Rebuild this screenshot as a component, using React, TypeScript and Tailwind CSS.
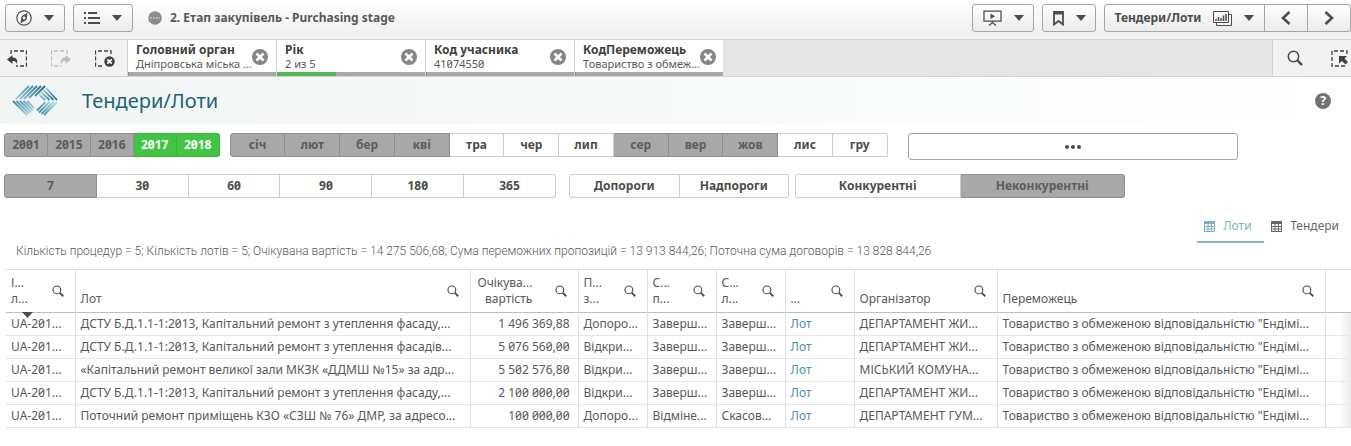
import React from 'react';

interface Option {
  label: string;
  state?: 'selected' | 'excluded';
}

const years: Option[] = [
  { label: '2001', state: 'excluded' },
  { label: '2015', state: 'excluded' },
  { label: '2016', state: 'excluded' },
  { label: '2017', state: 'selected' },
  { label: '2018', state: 'selected' },
];

const months: Option[] = [
  { label: 'січ', state: 'excluded' },
  { label: 'лют', state: 'excluded' },
  { label: 'бер', state: 'excluded' },
  { label: 'кві', state: 'excluded' },
  { label: 'тра' },
  { label: 'чер' },
  { label: 'лип' },
  { label: 'сер', state: 'excluded' },
  { label: 'вер', state: 'excluded' },
  { label: 'жов', state: 'excluded' },
  { label: 'лис' },
  { label: 'гру' },
];

const days: Option[] = [
  { label: '7', state: 'excluded' },
  { label: '30' },
  { label: '60' },
  { label: '90' },
  { label: '180' },
  { label: '365' },
];

const thresholds: Option[] = [{ label: 'Допороги' }, { label: 'Надпороги' }];

const competition: Option[] = [
  { label: 'Конкурентні' },
  { label: 'Неконкурентні', state: 'excluded' },
];

const selections = [
  { title: 'Головний орган', value: 'Дніпровська міська ...', share: 1 },
  { title: 'Рік', value: '2 из 5', share: 40 },
  { title: 'Код учасника', value: '41074550', share: 1 },
  { title: 'КодПереможець', value: 'Товариство з обмеж...', share: 1 },
];

const columns = [
  { lines: ['І...', 'л...'], width: 'w-[69px]', sorted: true },
  { lines: ['Лот'], width: '' },
  { lines: ['Очікува...', 'вартість'], width: 'w-[108px]', right: true },
  { lines: ['П...', 'з...'], width: 'w-[69px]' },
  { lines: ['С...', 'п...'], width: 'w-[69px]' },
  { lines: ['С...', 'л...'], width: 'w-[69px]' },
  { lines: ['...'], width: 'w-[69px]' },
  { lines: ['Організатор'], width: 'w-[143px]' },
  { lines: ['Переможець'], width: 'w-[328px]' },
];

const winner = 'Товариство з обмеженою відповідальністю "Ендімі...';

const rows = [
  ['UA-201...', 'ДСТУ Б.Д.1.1-1:2013, Капітальний ремонт з утеплення фасаду,...', '1 496 369,88', 'Допоро...', 'Заверш...', 'Заверш...', 'Лот', 'ДЕПАРТАМЕНТ ЖИ...', winner],
  ['UA-201...', 'ДСТУ Б.Д.1.1-1:2013, Капітальний ремонт з утеплення фасадів...', '5 076 560,00', 'Відкри...', 'Заверш...', 'Заверш...', 'Лот', 'ДЕПАРТАМЕНТ ЖИ...', winner],
  ['UA-201...', '«Капітальний ремонт великої зали МКЗК «ДДМШ №15» за адр...', '5 502 576,80', 'Відкри...', 'Заверш...', 'Заверш...', 'Лот', 'МІСЬКИЙ КОМУНА...', winner],
  ['UA-201...', 'ДСТУ Б.Д.1.1-1:2013, Капітальний ремонт з утеплення фасаду,...', '2 100 000,00', 'Відкри...', 'Заверш...', 'Заверш...', 'Лот', 'ДЕПАРТАМЕНТ ЖИ...', winner],
  ['UA-201...', 'Поточний ремонт приміщень КЗО «СЗШ № 76» ДМР, за адресо...', '100 000,00', 'Допоро...', 'Відміне...', 'Скасов...', 'Лот', 'ДЕПАРТАМЕНТ ГУМ...', winner],
];

const Caret: React.FC = () => (
  <svg width="10" height="6" viewBox="0 0 10 6" fill="#4d4d4d"><path d="M0 0h10L5 6z" /></svg>
);

const SearchIcon: React.FC<{ size: number }> = ({ size }) => (
  <svg width={size} height={size} viewBox="0 0 16 16" fill="none" stroke="#4a4a4a">
    <circle cx="6.5" cy="6.5" r="5.2" strokeWidth="1.5" />
    <path d="M10.4 10.4l4.6 4.6" strokeWidth="2.4" />
  </svg>
);

const ClearIcon: React.FC = () => (
  <svg width="16" height="16" viewBox="0 0 16 16">
    <circle cx="8" cy="8" r="8" fill="#858585" />
    <path d="M4.500 4.500l7 7M11.500 4.500l-7 7" stroke="#fff" strokeWidth="2.600" />
  </svg>
);

const TableIcon: React.FC = () => (
  <svg width="11" height="11" viewBox="0 0 11 11" fill="none" stroke="currentColor">
    <path d="M0 1.500h11" strokeWidth="3" />
    <path d="M.5 1v9.500h10V1M0 5.500h11M0 8h11M4 2v9M7.500 2v9" />
  </svg>
);

const Logo: React.FC = () => (
  <svg width="46" height="32" viewBox="0 0 46 32" fill="none" strokeWidth="1.8">
    <defs>
      <linearGradient id="up" gradientUnits="userSpaceOnUse" x1="6" y1="16" x2="30" y2="1">
        <stop offset="0" stopColor="#9fd0e0" />
        <stop offset="1" stopColor="#256f87" />
      </linearGradient>
      <linearGradient id="left" gradientUnits="userSpaceOnUse" x1="2" y1="16" x2="18" y2="30">
        <stop offset="0" stopColor="#3f8ba3" />
        <stop offset="1" stopColor="#a9d6e4" />
      </linearGradient>
      <linearGradient id="right" gradientUnits="userSpaceOnUse" x1="28" y1="5" x2="42" y2="16">
        <stop offset="0" stopColor="#b3dbe7" />
        <stop offset="1" stopColor="#256f87" />
      </linearGradient>
      <linearGradient id="down" gradientUnits="userSpaceOnUse" x1="42" y1="17" x2="29" y2="29">
        <stop offset="0" stopColor="#b3dbe7" />
        <stop offset="1" stopColor="#3f8ba3" />
      </linearGradient>
    </defs>
    <path stroke="url(#up)" d="M17 1L4 14M21 1L8 14M25 1L12 14M29 1L17 13M33 1L23 11" />
    <path stroke="url(#left)" d="M1 16L15 30M4.500 16L17 28.500M8 16L19 27M11.500 16L20.500 25M15 16L22 23" />
    <path stroke="url(#right)" d="M34 3L45 15M31 4.500L41.500 15M29 7L37.500 15M27 9.500L33 15" />
    <path stroke="url(#down)" d="M45 17L32 30M41.500 17L29.500 29M37.500 17L27 27.500M33.500 17L25 25.500" />
  </svg>
);

const buttonStyle =
  'h-7 flex items-center justify-center border border-[#a6a6a6] rounded-[3px] bg-linear-to-b from-white to-[#ebebeb]';

const ButtonGroup: React.FC<{ options: Option[]; label: string; className: string }> = ({ options, label, className }) => (
  <div role="group" aria-label={label} className={`flex h-6 ${className}`}>
    {options.map((o) => {
      const color =
        o.state === 'selected'
          ? 'bg-[#42c545] text-white border-[#3bb23e]'
          : o.state === 'excluded'
            ? 'bg-[#a8a8a8] text-[#5c5c5c] border-[#8f8f8f]'
            : 'bg-white text-[#4d4d4d] border-[#cccccc]';
      return (
        <button
          key={o.label}
          type="button"
          className={`flex-1 min-w-0 border border-l-0 first:border-l first:rounded-l-[3px] last:rounded-r-[3px] text-xs font-bold ${color}`}
        >
          {o.label}
        </button>
      );
    })}
  </div>
);

const TopBar: React.FC = () => (
  <header className="h-[39px] pl-[5px] pt-1 flex items-start justify-between bg-linear-to-b from-white to-[#efefef]">
    <div className="flex items-center gap-2">
      <button type="button" aria-label="Навігація" className={`${buttonStyle} w-15 gap-3`}>
        <svg width="16" height="16" viewBox="0 0 16 16" fill="none" stroke="#4d4d4d">
          <circle cx="8" cy="8" r="7.2" strokeWidth="1.2" />
          <path d="M11 3.500L10 9.600 5 12.500 6 6.400z" fill="#4d4d4d" />
          <circle cx="8" cy="8" r="1.400" fill="#fff" stroke="none" />
        </svg>
        <Caret />
      </button>
      <button type="button" aria-label="Меню" className={`${buttonStyle} w-15 gap-3`}>
        <svg width="16" height="12" viewBox="0 0 16 12" stroke="#4d4d4d" strokeWidth="2">
          <path d="M0 1h2M0 6h2M0 11h2M4 1h9M4 6h12M4 11h12" />
        </svg>
        <Caret />
      </button>
      <div className="flex items-center gap-2 pl-[7px] text-xs font-bold text-[#595959]">
        <svg width="14" height="14" viewBox="0 0 14 14">
          <circle cx="7" cy="7" r="6.800" fill="#8c8c8c" />
          <path d="M2 7h10" stroke="#c9c9c9" strokeWidth="1.500" strokeDasharray="2 1" />
        </svg>
        <h1>2. Етап закупівель - Purchasing stage</h1>
      </div>
    </div>
    <div className="flex items-center gap-2">
      <button type="button" aria-label="Історії" className={`${buttonStyle} w-[62px] gap-3`}>
        <svg width="19" height="16" viewBox="0 0 19 16" fill="none" stroke="#4d4d4d" strokeWidth="1.300">
          <path d="M1 1.200h17v10H1zM9.500 11v2M6 15.500l3.500-3 3.500 3" />
          <path d="M7.500 3.500l4.500 2.700-4.500 2.700z" fill="#4d4d4d" stroke="none" />
        </svg>
        <Caret />
      </button>
      <button type="button" aria-label="Закладки" className={`${buttonStyle} w-[54px] gap-3`}>
        <svg width="11" height="15" viewBox="0 0 11 15" fill="none" stroke="#4d4d4d" strokeWidth="1.800">
          <path d="M1 1h9v12.500L5.500 10 1 13.500z" />
          <path d="M1 2h9" strokeWidth="3" />
        </svg>
        <Caret />
      </button>
      <div className="flex">
        <button type="button" className={`${buttonStyle} w-[161px] rounded-r-none text-xs font-bold text-[#4d4d4d]`}>
          Тендери/Лоти
          <svg className="ml-3 mr-3" width="19" height="15" viewBox="0 0 19 15" fill="none" stroke="#4d4d4d">
            <path d="M.5.500h15v11H.5zM16 3.500h2.500v11h-15V12" />
            <path d="M3 10V8M5.500 10V6M8 10V7M10.500 10V4.500M13 10V3" strokeWidth="1.500" />
          </svg>
          <Caret />
        </button>
        <button type="button" aria-label="Попередній аркуш" className={`${buttonStyle} w-11 rounded-none -ml-px`}>
          <svg width="10" height="14" viewBox="0 0 10 14" fill="none" stroke="#4d4d4d" strokeWidth="2.600"><path d="M8.500 1L2 7l6.500 6" /></svg>
        </button>
        <button type="button" aria-label="Наступний аркуш" className={`${buttonStyle} w-11 rounded-l-none -ml-px`}>
          <svg width="10" height="14" viewBox="0 0 10 14" fill="none" stroke="#4d4d4d" strokeWidth="2.600"><path d="M1.500 1L8 7l-6.500 6" /></svg>
        </button>
      </div>
    </div>
  </header>
);

const SelectionsBar: React.FC = () => (
  <section className="h-[38px] flex border-y border-[#d2d2d2] bg-[#e5e5e5]">
    <div className="w-[127px] flex items-center gap-6 pl-[7px] bg-[#f2f2f2]">
      <button type="button" aria-label="Крок назад">
        <svg width="20" height="17" viewBox="0 0 20 17" fill="none" stroke="#404040">
          <path d="M4 4V1H19.500v15H9" strokeWidth="1.300" strokeDasharray="4 2" />
          <path d="M0 9.500L5.500 5v2.500c3.500 0 5.500 2 4.500 6.500-1-2.500-2.500-3-4.500-3V14z" fill="#404040" stroke="none" />
        </svg>
      </button>
      <button type="button" aria-label="Крок вперед">
        <svg width="20" height="17" viewBox="0 0 20 17" fill="none" stroke="#bdbdbd">
          <path d="M16 4V1H.5v15H10" strokeWidth="1.300" strokeDasharray="4 2" />
          <path d="M20 9.500L14.500 5v2.500c-3.500 0-5.500 2-4.500 6.500 1-2.500 2.500-3 4.500-3V14z" fill="#bdbdbd" stroke="none" />
        </svg>
      </button>
      <button type="button" aria-label="Очистити все">
        <svg width="20" height="17" viewBox="0 0 20 17" fill="none" stroke="#404040">
          <path d="M16 4V1H.5v15H9" strokeWidth="1.300" strokeDasharray="4 2" />
          <circle cx="14.500" cy="11.500" r="5.200" fill="#404040" stroke="none" />
          <path d="M12.300 9.300l4.400 4.400M16.700 9.300l-4.400 4.400" stroke="#fff" strokeWidth="1.800" />
        </svg>
      </button>
    </div>
    {selections.map((s) => (
      <div key={s.title} className="w-[149px] flex flex-col border-l border-[#d2d2d2] bg-white">
        <div className="flex-1 flex items-center justify-between px-2 pt-px">
          <div className="whitespace-nowrap">
            <p className="text-xs leading-[14px] font-bold text-[#404040]">{s.title}</p>
            <p className="text-[11px] leading-[13px] text-[#595959]">{s.value}</p>
          </div>
          <button type="button" aria-label={`Очистити ${s.title}`}><ClearIcon /></button>
        </div>
        <div className="h-1 bg-[#a8a8a8]">
          <div className="h-full bg-[#52b656]" style={{ width: `${s.share}%` }} />
        </div>
      </div>
    ))}
    <div className="w-[79px] ml-auto flex items-center gap-7 pl-[14px] border-l border-[#d2d2d2] bg-[#f2f2f2] overflow-hidden">
      <button type="button" aria-label="Пошук"><SearchIcon size={16} /></button>
      <button type="button" aria-label="Інструмент вибору">
        <svg width="17" height="17" viewBox="0 0 17 17" fill="none" stroke="#404040">
          <path d="M16 4V1H1v15h15" strokeWidth="1.300" strokeDasharray="4 2" />
          <path d="M8 6h8l-2.500 2.500L17 12l-2.500 2.500-3.500-3.500L8 13.500z" fill="#404040" stroke="none" />
        </svg>
      </button>
    </div>
  </section>
);

const LotsTable: React.FC = () => (
  <div className="relative pl-[6px]">
    <table className="w-full table-fixed border-collapse text-xs text-[#595959] whitespace-nowrap">
      <thead>
        <tr className="h-[43px] border-t border-t-[#e0e0e0] border-b border-b-[#bfbfbf]">
          {columns.map((c, i) => (
            <th key={i} className={`${c.width} relative px-[5px] border-r border-r-[#e0e0e0] font-normal align-bottom`}>
              <div className="flex items-end justify-between">
                <span className={`leading-4 pb-[5px] ${c.right ? 'pl-[2px] text-right' : 'text-left'}`}>
                  {c.lines.map((line) => <span key={line} className="block">{line}</span>)}
                </span>
                <button type="button" aria-label="Пошук у стовпці" className="pb-[15px] pr-[6px]"><SearchIcon size={12} /></button>
              </div>
              {c.sorted && (
                <svg className="absolute left-4 top-full" width="11" height="6" viewBox="0 0 11 6" fill="#4d4d4d"><path d="M0 0h11L5.500 6z" /></svg>
              )}
            </th>
          ))}
          <td className="w-[26px]" />
        </tr>
      </thead>
      <tbody>
        {rows.map((row, r) => (
          <tr key={r} className="h-[23px] border-b border-[#e6e6e6]">
            {row.map((cell, i) => (
              <td key={i} className={`border-r border-r-[#e0e0e0] ${i === 2 ? 'pr-2 text-right' : 'pl-[5px]'}`}>
                {i === 6 ? <a href="#lot" className="text-[#4a8fb5]">{cell}</a> : cell}
              </td>
            ))}
            <td />
          </tr>
        ))}
      </tbody>
    </table>
    <div className="absolute right-0 top-11 bottom-0 w-3 bg-linear-to-r from-transparent to-[#ececec]" />
  </div>
);

const App: React.FC = () => (
  <main className="font-['Noto_Sans',sans-serif] slashed-zero bg-white overflow-hidden">
    <TopBar />
    <SelectionsBar />
    <div className="h-[47px] flex items-center pl-3 pr-5 bg-linear-to-r from-[#f1f5f4] to-white">
      <Logo />
      <h2 className="ml-6 text-xl text-[#1b6475]">Тендери/Лоти</h2>
      <button type="button" aria-label="Довідка" className="ml-auto size-4 rounded-full bg-[#737373] text-xs leading-4 font-bold text-white">?</button>
    </div>

    <div className="flex items-start pl-1 pt-[9px] pr-[113px]">
      <ButtonGroup label="Рік" options={years} className="flex-[216] mr-[10px]" />
      <ButtonGroup label="Місяць" options={months} className="flex-[659] mr-5" />
      <button type="button" aria-label="Інші фільтри" className="flex-[329] h-[27px] flex items-center justify-center gap-[2px] border border-[#a6a6a6] rounded-[3px]">
        <span className="size-1 rounded-full bg-[#4d4d4d]" />
        <span className="size-1 rounded-full bg-[#4d4d4d]" />
        <span className="size-1 rounded-full bg-[#4d4d4d]" />
      </button>
    </div>
    <div className="flex pl-1 pt-[14px] pr-[226px]">
      <ButtonGroup label="Днів" options={days} className="flex-[552] mr-[13px]" />
      <ButtonGroup label="Пороги" options={thresholds} className="flex-[220] mr-[6px]" />
      <ButtonGroup label="Конкурентність" options={competition} className="flex-[330]" />
    </div>

    <nav className="mt-[13px] h-8 flex justify-end pr-3 text-xs">
      <a href="#lots" className="w-[67px] flex items-center pl-[7px] gap-2 border-b-2 border-[#8fb0bd] text-[#7fb0c4]">
        <TableIcon />Лоти
      </a>
      <a href="#tenders" className="flex items-center pl-[7px] gap-2 border-b-2 border-transparent text-[#666666]">
        <TableIcon />Тендери
      </a>
    </nav>
    <p className="h-[26px] pl-4 font-['Roboto',sans-serif] font-light text-xs leading-4 text-[#595959]">
      Кількість процедур = 5; Кількість лотів = 5; Очікувана вартість = 14 275 506,68; Сума переможних пропозицій = 13 913 844,26; Поточна сума договорів = 13 828 844,26
    </p>
    <LotsTable />
  </main>
);

export default App;
